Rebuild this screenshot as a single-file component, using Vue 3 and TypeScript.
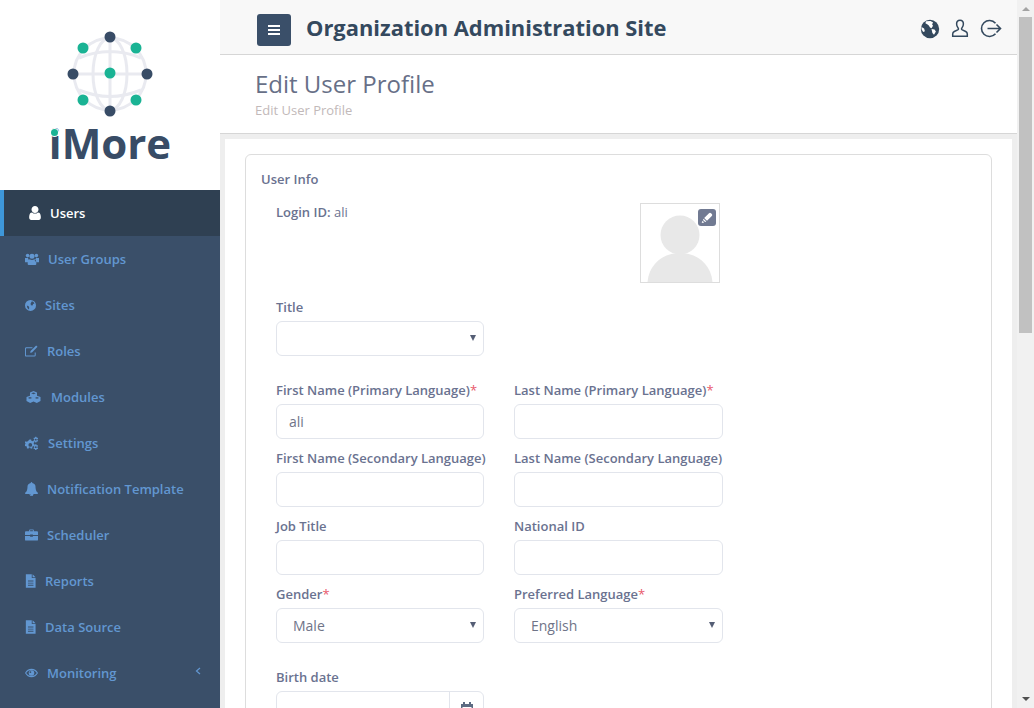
<template>
  <div class="app">
    <aside class="sidebar">
      <div class="brand">
        <svg class="brand-globe" width="100" height="96" viewBox="60 26 100 96">
          <g fill="none" stroke="#e9eaf0" stroke-width="3">
            <circle cx="110" cy="74" r="36" />
            <ellipse cx="110" cy="74" rx="17" ry="36" />
            <path d="M74 74h72M110 38v72M79 58q31-13 62 0M79 90q31 13 62 0" />
          </g>
          <circle v-for="n in darkNodes" :key="n[0] + '-' + n[1]" :cx="n[0]" :cy="n[1]" r="5.5" fill="#384c66" />
          <circle v-for="n in greenNodes" :key="n[0] + '-' + n[1]" :cx="n[0]" :cy="n[1]" r="5.5" fill="#1ab394" />
        </svg>
        <div class="brand-name">iMore<span class="brand-dot"></span></div>
      </div>
      <nav class="menu">
        <a v-for="item in menu" :key="item.label" class="menu-item" :class="{ active: item.active }">
          <svg class="menu-icon" :style="{ width: item.w + 'px' }" :viewBox="item.box" height="14" fill="currentColor" v-html="item.icon"></svg>
          <span>{{ item.label }}</span>
          <svg v-if="item.arrow" class="menu-arrow" width="6" height="8" viewBox="0 0 6 8" fill="none" stroke="currentColor" stroke-width="1.2"><path d="M5 1 1.5 4 5 7" /></svg>
        </a>
      </nav>
    </aside>

    <main class="main">
      <header class="topbar">
        <button type="button" class="burger" aria-label="Menu"><i></i><i></i><i></i></button>
        <h1 class="site-title">Organization Administration Site</h1>
        <div class="top-icons">
          <svg width="20" height="20" viewBox="0 0 20 20">
            <circle cx="10" cy="10" r="9.2" fill="#34495e" />
            <path d="M6 2.2 10.5 2l2.6 1.4-1 1.8.9 1.6-1.5 2.4-1.5-.6-1.2-2.2L7.2 5.2 5.4 4.2zM11.5 10l3 .4 1.4 2-1.9 3.4-1.6-1.8zM1.5 8l2.6 1.6.8 2.6-1.7.7-1.7-2.6z" fill="#fff" />
          </svg>
          <svg width="18" height="19" viewBox="0 0 18 19" fill="none" stroke="#34495e" stroke-width="1.5">
            <path d="M9 1.2c2.2 0 3.4 1.7 3.4 3.9 0 1.6-.7 2.9-1.5 3.8-.6.7-.4 1.6.4 2l3.4 1.6c1 .5 1.6 1.3 1.6 2.4v2.3H1.700v-2.300c0-1.100.6-1.900 1.600-2.400l3.400-1.600c.8-.4 1-1.300.4-2-.8-.9-1.500-2.200-1.500-3.800C5.600 2.900 6.800 1.200 9 1.200z" />
          </svg>
          <svg width="22" height="19" viewBox="0 0 22 19" fill="none" stroke="#34495e" stroke-width="1.6">
            <path d="M15.500 4.200A8 8 0 1 0 15.500 14.800M7.500 9.500H20.500M16.500 5.500l4 4-4 4" />
          </svg>
        </div>
      </header>

      <section class="page-head">
        <h2 class="page-title">Edit User Profile</h2>
        <div class="crumb">Edit User Profile</div>
      </section>

      <section class="content">
        <div class="panel">
          <div class="card">
            <div class="card-title">User Info</div>
            <div class="login-row">
              <div class="login-id"><b>Login ID:</b> ali</div>
              <div class="avatar">
                <svg width="78" height="78" viewBox="0 0 78 78">
                  <circle cx="39" cy="31" r="19.500" fill="#e8e8e8" />
                  <path d="M6.500 78C8 61 21 49 39 49s31 12 32.500 29z" fill="#e8e8e8" />
                </svg>
                <span class="avatar-edit">
                  <svg width="12" height="12" viewBox="0 0 12 12" fill="#fff">
                    <path d="M8 1.200a1.400 1.400 0 0 1 2 0l.8.8a1.400 1.400 0 0 1 0 2L6 8.800 3.200 6zM2.600 6.700l2.700 2.700-1.200.6-2.100-2.100zM1.500 8.800l1.700 1.700-2.500.6z" />
                  </svg>
                </span>
              </div>
            </div>

            <div class="field title-field">
              <label>Title</label>
              <div class="select-wrap"><select class="control"><option></option></select></div>
            </div>

            <div class="form-grid">
              <div v-for="f in fields" :key="f.label" class="field">
                <label>{{ f.label }}<em v-if="f.required">*</em></label>
                <div v-if="f.select" class="select-wrap">
                  <select class="control select-text"><option>{{ f.value }}</option></select>
                </div>
                <input v-else class="control" type="text" :value="f.value" />
              </div>
            </div>

            <div class="field birth-field">
              <label>Birth date</label>
              <div class="date-group">
                <input type="text" class="date-input" />
                <span class="date-btn">
                  <svg width="12" height="13" viewBox="0 0 12 13" fill="#5d6b82">
                    <path d="M2 0h2v2h4V0h2v2h2v11H0V2h2zM1.500 5v6.500h9V5z" />
                  </svg>
                </span>
              </div>
            </div>
          </div>
        </div>
      </section>
    </main>

    <div class="scrollbar">
      <span class="arrow up"></span>
      <span class="thumb"></span>
      <span class="arrow down"></span>
    </div>
  </div>
</template>

<script setup lang="ts">
interface MenuItem {
  label: string
  w: number
  box: string
  icon: string
  active?: boolean
  arrow?: boolean
}

interface Field {
  label: string
  value?: string
  required?: boolean
  select?: boolean
}

const darkNodes = [[110, 37], [73, 74], [147, 74], [110, 111]]
const greenNodes = [[83, 48], [136, 48], [110, 73], [83, 100], [136, 100]]

const fileIcon = '<path d="M1 0h7v4.500h4.500V16H1zM9 0l3.500 3.500H9zM3.500 7.500v1h6.500v-1zM3.500 10v1h6.500v-1zM3.500 12.500v1h6.500v-1z" fill-rule="evenodd"/>'

const menu: MenuItem[] = [
  {
    label: 'Users',
    w: 12,
    box: '256 128 1280 1536',
    active: true,
    icon: '<path d="M1536 1399q0 109-62.500 187t-150.500 78h-854q-88 0-150.500-78t-62.500-187q0-85 8.500-160.500t31.500-152 58.500-131 94-89 134.500-34.500q131 128 313 128t313-128q76 0 134.500 34.500t94 89 58.500 131 31.500 152 8.500 160.500zm-256-887q0 159-112.500 271.500t-271.500 112.500-271.500-112.500-112.500-271.500 112.500-271.500 271.500-112.500 271.500 112.500 112.500 271.500z"/>',
  },
  {
    label: 'User Groups',
    w: 14,
    box: '0 0 14 12',
    icon: '<circle cx="2.600" cy="2.600" r="1.800"/><circle cx="11.400" cy="2.600" r="1.800"/><circle cx="7" cy="3.200" r="2.500"/><path d="M0 5h3q.3 1.800 1.400 2.500-1.200.6-1.400 1.700H0zM14 5h-3q-.3 1.800-1.400 2.500 1.200.6 1.400 1.700h3zM4.500 6.200Q7 7.600 9.500 6.200q1.800.6 1.800 3V11q0 1-1 1H3.700q-1 0-1-1V9.200q0-2.400 1.800-3z"/>',
  },
  {
    label: 'Sites',
    w: 11,
    box: '0 0 12 14',
    icon: '<path fill-rule="evenodd" d="M6 1.500a6 6 0 1 1 0 12 6 6 0 0 1 0-12zM7.500 3l1.800.6 1 1.800-1.500.6-.6 1.500-1.800-.3-.3-1.800zM2 7.500l2 .8.700 2-.8 1.500L2.500 10z"/>',
  },
  {
    label: 'Roles',
    w: 13,
    box: '0 0 14 14',
    icon: '<path fill="none" stroke="currentColor" stroke-width="1.100" d="M11 8.500v3q0 1-1 1H1.500q-1 0-1-1V4.500q0-1 1-1H8"/><path d="M12 1l1.500 1.500-6 6-2 .5.500-2z"/>',
  },
  {
    label: 'Modules',
    w: 17,
    box: '0 0 17 14',
    icon: '<path fill-rule="evenodd" d="M8.500 1l3.500 1.400v3.400l3.500 1.300v4L11.800 13l-3.300-1.500L5.200 13 1.500 11.100v-4L5 5.800V2.400zM8.500 2.500 6.200 3.300l2.300.9 2.300-.9zM5 7.100l-2.200.8L5 8.800l2.200-.9zM12 7.100l-2.200.8 2.200.9 2.200-.9z"/>',
  },
  {
    label: 'Settings',
    w: 14,
    box: '0 0 14 14',
    icon: '<path fill-rule="evenodd" d="M4.500 3.500h1.600l.3 1.200 1 .5 1.200-.5.900 1.200-.8 1 .1 1.100 1.100.7-.5 1.500-1.300-.1-.8.800.1 1.300-1.500.5-.7-1.100H4l-.7 1.100-1.500-.5.100-1.300-.8-.8-1.300.1-.4-1.500 1.100-.7V7.400l-.8-1 .9-1.200 1.200.5 1-.5zM5.300 7a1.900 1.900 0 1 0 0 3.800 1.900 1.900 0 0 0 0-3.800z"/><path fill-rule="evenodd" d="M11.300 0.800l.5.900h1l.3 1-.8.600v.7l.8.600-.3 1h-1l-.5.900h-1l-.5-.9h-1l-.3-1 .8-.6v-.7l-.8-.6.300-1h1l.5-.9zm-.5 2a.9.900 0 1 0 0 1.800.9.900 0 0 0 0-1.800zM11.300 8.300l.5.900h1l.3 1-.8.600v.7l.8.600-.3 1h-1l-.5.900h-1l-.5-.9h-1l-.3-1 .8-.6v-.7l-.8-.6.300-1h1l.5-.9zm-.5 2a.9.900 0 1 0 0 1.800.9.900 0 0 0 0-1.800z"/>',
  },
  {
    label: 'Notification Template',
    w: 13,
    box: '64 0 1664 1792',
    icon: '<path d="M912 1696q0-16-16-16-59 0-101.500-42.500t-42.500-101.500q0-16-16-16t-16 16q0 73 51.500 124.500t124.500 51.500q16 0 16-16zm816-288q0 52-38 90t-90 38h-448q0 106-75 181t-181 75-181-75-75-181h-448q-52 0-90-38t-38-90q50-42 91-88t85-119.500 74.500-158.500 50-206 19.500-260q0-152 117-282.500t307-158.500q-8-19-8-39 0-40 28-68t68-28 68 28 28 68q0 20-8 39 190 28 307 158.500t117 282.500q0 139 19.500 260t50 206 74.500 158.500 85 119.500 91 88z"/>',
  },
  {
    label: 'Scheduler',
    w: 13,
    box: '0 0 14 14',
    icon: '<path fill-rule="evenodd" d="M4.500 3V1.800q0-.8.800-.8h3.400q.8 0 .8.800V3H13q1 0 1 1v3H8.500V6.500h-3V7H0V4q0-1 1-1zM5.500 3h3V2h-3zM0 8h5.500v1h3V8H14v4q0 1-1 1H1q-1 0-1-1z"/>',
  },
  { label: 'Reports', w: 11, box: '0 0 13 16', icon: fileIcon },
  { label: 'Data Source', w: 11, box: '0 0 13 16', icon: fileIcon },
  {
    label: 'Monitoring',
    w: 13,
    box: '0 0 14 14',
    arrow: true,
    icon: '<path fill-rule="evenodd" d="M7 2.500q4.500 0 7 4.500-2.500 4.500-7 4.500T0 7q2.500-4.500 7-4.500zM7 3.700Q3.400 3.700 1.300 7q2.100 3.300 5.700 3.300T12.700 7Q10.600 3.700 7 3.700zM7 4a3 3 0 1 1 0 6 3 3 0 0 1 0-6zM5.800 5a1 1 0 1 0 0 2 1 1 0 0 0 0-2z"/>',
  },
]

const fields: Field[] = [
  { label: 'First Name (Primary Language)', value: 'ali', required: true },
  { label: 'Last Name (Primary Language)', required: true },
  { label: 'First Name (Secondary Language)' },
  { label: 'Last Name (Secondary Language)' },
  { label: 'Job Title' },
  { label: 'National ID' },
  { label: 'Gender', value: 'Male', required: true, select: true },
  { label: 'Preferred Language', value: 'English', required: true, select: true },
]
</script>

<style scoped>
.app {
  display: flex;
  width: 1034px;
  height: 708px;
  overflow: hidden;
  font-family: "Open Sans", "Liberation Sans", sans-serif;
  background: #fff;
}

.sidebar {
  flex: 0 0 220px;
  background: #3a4f69;
}

.brand {
  height: 190px;
  background: #fff;
  display: flex;
  flex-direction: column;
  align-items: center;
  padding-top: 26px;
  box-sizing: border-box;
}

.brand-globe {
  display: block;
  flex: none;
}

.brand-name {
  position: relative;
  margin-top: -4px;
  font-size: 42px;
  line-height: 50px;
  font-weight: 700;
  color: #384c66;
}

.brand-dot {
  position: absolute;
  left: 2px;
  top: 11px;
  width: 7px;
  height: 7px;
  border-radius: 50%;
  background: #1ab394;
  box-shadow: 0 0 0 1px #fff;
}

.menu-item {
  display: flex;
  align-items: center;
  gap: 9px;
  height: 46px;
  padding-left: 25px;
  font-size: 13px;
  font-weight: 600;
  color: #6297d1;
}

.menu-item.active {
  padding-left: 25px;
  border-left: 4px solid #3e97d9;
  background: #2f4052;
  color: #fff;
}

.menu-icon {
  flex: none;
}

.menu-arrow {
  margin-left: auto;
  margin-right: 19px;
  margin-bottom: 4px;
}

.main {
  flex: 1;
  min-width: 0;
  display: flex;
  flex-direction: column;
}

.topbar {
  flex: none;
  height: 55px;
  box-sizing: border-box;
  display: flex;
  align-items: center;
  padding: 0 15px 0 37px;
  background: #f8f8f8;
  border-bottom: 1px solid #d6d6d6;
}

.burger {
  width: 34px;
  height: 32px;
  margin-top: 6px;
  padding: 0;
  border: 0;
  border-radius: 3px;
  background: #3a4f69;
  display: flex;
  flex-direction: column;
  align-items: center;
  justify-content: center;
  gap: 2px;
}

.burger i {
  display: block;
  width: 12px;
  height: 2px;
  background: #fff;
}

.site-title {
  margin: 1px 0 0 15px;
  font-size: 21.900px;
  font-weight: 700;
  color: #34495e;
}

.top-icons {
  margin-left: auto;
  margin-top: 3px;
  display: flex;
  align-items: center;
  gap: 11px;
}

.page-head {
  flex: none;
  height: 79px;
  box-sizing: border-box;
  padding: 12px 0 0 35px;
  background: #fff;
  border-bottom: 1px solid #d6d6d6;
}

.page-title {
  margin: 0;
  font-size: 24px;
  line-height: 33px;
  font-weight: 400;
  color: #676f87;
}

.crumb {
  margin-top: 2px;
  font-size: 13px;
  line-height: 17px;
  color: #c2b9b9;
}

.content {
  flex: 1;
  min-height: 0;
  background: #eeeeee;
  padding: 5px 5px 0;
}

.panel {
  height: 100%;
  background: #fff;
  padding: 15px 20px 0;
  box-sizing: border-box;
}

.card {
  height: 640px;
  box-sizing: border-box;
  padding: 15px 15px 0;
  border: 1px solid #dddddd;
  border-radius: 6px;
  font-size: 13px;
  color: #6a7290;
}

.card-title {
  font-weight: 600;
  line-height: 18px;
}

.login-row {
  display: flex;
  margin: 15px 0 0 15px;
}

.login-id {
  width: 364px;
  line-height: 18px;
}

.login-id b {
  font-weight: 600;
}

.avatar {
  position: relative;
  width: 80px;
  height: 80px;
  box-sizing: border-box;
  border: 1px solid #dddddd;
}

.avatar svg {
  display: block;
}

.avatar-edit {
  position: absolute;
  top: 5px;
  right: 3px;
  width: 18px;
  height: 17px;
  border-radius: 3px;
  background: #717a92;
  display: flex;
  align-items: center;
  justify-content: center;
}

.field label {
  display: block;
  font-weight: 600;
  line-height: 18px;
  margin-bottom: 5px;
  white-space: nowrap;
}

.field label em {
  font-style: normal;
  font-weight: 400;
  color: #e8596b;
}

.title-field {
  width: 208px;
  margin: 15px 0 0 15px;
}

.form-grid {
  display: grid;
  grid-template-columns: 208px 209px;
  column-gap: 30px;
  row-gap: 10px;
  margin: 25px 0 0 15px;
}

.birth-field {
  width: 208px;
  margin: 25px 0 0 15px;
}

.control {
  display: block;
  width: 100%;
  height: 35px;
  box-sizing: border-box;
  padding: 0 12px;
  border: 1px solid #e2e5ec;
  border-radius: 6px;
  background: #fff;
  font-family: inherit;
  font-size: 14px;
  color: #6f7488;
  outline: none;
  appearance: none;
}

.select-text {
  padding-left: 16px;
}

.select-wrap {
  position: relative;
}

.select-wrap::after {
  content: "";
  position: absolute;
  right: 8px;
  top: 14px;
  border-left: 3px solid transparent;
  border-right: 3px solid transparent;
  border-top: 6px solid #555e75;
}

.date-group {
  display: flex;
  height: 35px;
  box-sizing: border-box;
  border: 1px solid #e2e5ec;
  border-radius: 6px;
}

.date-input {
  flex: 1;
  min-width: 0;
  border: 0;
  background: transparent;
  outline: none;
}

.date-btn {
  flex: 0 0 33px;
  border-left: 1px solid #e2e5ec;
  display: flex;
  align-items: center;
  justify-content: center;
}

.scrollbar {
  flex: 0 0 17px;
  display: flex;
  flex-direction: column;
  align-items: center;
  background: #f1f1f1;
}

.thumb {
  width: 13px;
  height: 316px;
  background: #c1c1c1;
}

.arrow {
  flex: none;
  width: 0;
  height: 0;
  border-left: 4px solid transparent;
  border-right: 4px solid transparent;
}

.arrow.up {
  margin: 7px 0 6px;
  border-bottom: 4px solid #a3a3a3;
}

.arrow.down {
  margin-top: auto;
  margin-bottom: 7px;
  border-top: 4px solid #505050;
}
</style>
